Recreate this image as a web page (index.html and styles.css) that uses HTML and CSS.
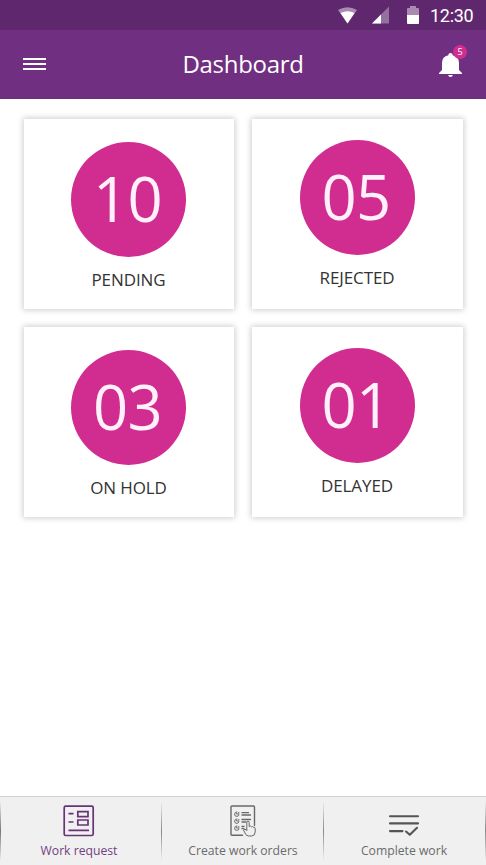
FILE: index.html
```html
<!DOCTYPE html>
<html lang="en">
<head>
<meta charset="utf-8">
<title>Dashboard</title>
<link rel="stylesheet" href="styles.css">
</head>
<body>
<div class="app">
  <div class="status">
    <svg class="wifi" width="19" height="18" viewBox="0 0 19 18"><path d="M0 4Q9.500-1.500 19 4L9.500 17.500Z" fill="#a98ab2"/><path d="M2.500 7Q9.500 3.500 16.500 7L9.500 17.500Z" fill="#fff"/></svg>
    <svg class="signal" width="17" height="18" viewBox="0 0 17 18"><path d="M0 17.500L17 .5V17.500Z" fill="#94709f"/><path d="M0 17.500L9 8.500V17.500Z" fill="#fff"/></svg>
    <svg class="battery" width="12" height="18" viewBox="0 0 12 18"><path d="M0 3Q0 2 1 2H3V0H9V2H11Q12 2 12 3V9H0Z" fill="#a98ab2"/><path d="M0 9H12V17Q12 18 11 18H1Q0 18 0 17Z" fill="#fff"/></svg>
    <span class="time">12:30</span>
  </div>
  <header class="header">
    <button class="menu" aria-label="Menu"><i></i><i></i><i></i></button>
    <h1>Dashboard</h1>
    <div class="bell">
      <svg width="23" height="24" viewBox="0 0 23 24"><path d="M0 21V20L3 17V10Q3 3.500 9.400 2.200V1.700Q9.400 0 11.500 0T13.600 1.700V2.200Q20 3.500 20 10V17L23 20V21ZM9.200 22H13.800Q13.500 24 11.500 24T9.200 22Z" fill="#fff"/></svg>
      <span class="badge">5</span>
    </div>
  </header>
  <main class="grid">
    <section class="card"><div class="circle"><span>10</span></div><p>PENDING</p></section>
    <section class="card raised"><div class="circle"><span>05</span></div><p>REJECTED</p></section>
    <section class="card"><div class="circle"><span>03</span></div><p>ON HOLD</p></section>
    <section class="card raised"><div class="circle"><span>01</span></div><p>DELAYED</p></section>
  </main>
  <nav class="tabs">
    <a class="tab active">
      <svg width="32" height="32" viewBox="0 0 32 32" fill="none" stroke="#67347a"><rect x="1.200" y="1.200" width="29" height="29.300" rx="1.500" stroke-width="1.700"/><path d="M5.500 8.700H10.500M5.500 17H10.500M5.500 25.300H26" stroke-width="1.700"/><path d="M14.800 6.700H25V11.700H14.800ZM14.800 15H25V20H14.800Z" stroke-width="1.700"/></svg>
      <span>Work request</span>
    </a>
    <a class="tab">
      <svg width="26" height="32" viewBox="0 0 26 32" fill="none" stroke="#686868" stroke-linecap="round"><path d="M12.500 30.300H2Q1 30.300 1 29.300V2Q1 1 2 1H23.500Q24.500 1 24.500 2V20.500" stroke-width="1.400"/><path d="M7 7A2.200 2.200 0 1 0 9 9M7 14A2.200 2.200 0 1 0 9 16M7 21A2.200 2.200 0 1 0 9 23M6.300 8.500L7.300 9.300L9 7.300M6.300 15.500L7.300 16.300L9 14.300M6.300 22.500L7.300 23.300L9 21.300" stroke-width="1"/><path d="M12 7.700H18.500M12 10H20.500M12 14.500H20.500M12 17H16M12 21.500H14M12 23.700H14" stroke-width="1.300"/><path d="M16.800 25V17.500Q16.800 16.200 18 16.200T19.200 17.500V21.500Q20.600 20.500 21.500 21.800Q22.800 21 23.600 22.400Q25.200 22 25.200 23.800V27Q25.200 31 21.300 31H18.700Q16 31 15 28L13.500 25Q14.500 23.400 16.800 25Z" fill="#f0f0f0" stroke-width="1"/></svg>
      <span>Create work orders</span>
    </a>
    <a class="tab last">
      <svg width="32" height="32" viewBox="0 0 32 32" fill="none" stroke="#555" stroke-width="2.100" stroke-linecap="round" stroke-linejoin="round"><path d="M2 11.200H30M2 18.400H30M2 26.100H14.500M18 26.500L21.800 29.800L29 22.800"/></svg>
      <span>Complete work</span>
    </a>
  </nav>
</div>
</body>
</html>
```
FILE: styles.css
```css
* { box-sizing: border-box; }
body { margin: 0; background: #fff; font-family: "Open Sans", sans-serif; }
.app { width: 486px; height: 865px; display: flex; flex-direction: column; overflow: hidden; }
.status { height: 30px; flex: none; background: #5f276d; display: flex; align-items: flex-start; justify-content: flex-end; padding: 6px 12px 0 0; }
.status svg { display: block; }
.wifi { margin-right: 15px; }
.signal { margin-right: 18px; }
.battery { margin-right: 11px; }
.time { font: 18px/20px Roboto, sans-serif; color: #fff; width: 44px; white-space: nowrap; letter-spacing: -.3px; }
.header { height: 69px; flex: none; background: #702f80; border-bottom: 1px solid #63356f; display: flex; justify-content: space-between; padding: 0 23px; }
.menu { width: 24px; height: 14px; margin-top: 28px; padding: 0; border: 0; background: none; display: flex; flex-direction: column; gap: 3px; }
.menu i { display: block; width: 23px; height: 2px; background: #fff; }
h1 { margin: 16px 0 0; font-size: 24px; line-height: 36px; font-weight: 400; letter-spacing: -.3px; color: #fff; }
.bell { position: relative; width: 24px; height: 24px; margin-top: 23px; }
.bell svg { display: block; }
.badge { position: absolute; left: 14px; top: -8px; width: 14px; height: 14px; border-radius: 50%; background: #d12d91; color: #fff; font-size: 9px; line-height: 14px; text-align: center; }
.grid { flex: 1; display: grid; grid-template-columns: 210px 211px; grid-template-rows: 190px 190px; gap: 18px; padding: 20px 23px 0 24px; align-content: start; }
.card { background: #fff; box-shadow: 0 0 6px 1px rgba(0,0,0,.2); display: flex; flex-direction: column; align-items: center; padding: 23px 1px 0 0; }
.raised { padding-top: 21.4px; }
.circle { flex: none; width: 115px; height: 115px; border-radius: 50%; background: #d12d91; display: flex; align-items: center; justify-content: center; color: #fff0fa; font-size: 61.5px; line-height: 113px; padding: 0 2px 2px 0; letter-spacing: -.6px; }
.card p { margin: 11px 0 0; font-size: 17px; line-height: 24px; letter-spacing: -.1px; color: #333; white-space: nowrap; }
.tabs { height: 69px; flex: none; display: grid; grid-template-columns: 162px 162px 162px; background: #f0f0f0; border-top: 1px solid #d2d2d2; }
.tab { display: flex; flex-direction: column; align-items: center; padding-top: 8px; color: #6b6b6b; font-size: 12.2px; background: linear-gradient(#f0f0f0, #888 50%, #f0f0f0) right 0 top 4px / 1px 60px no-repeat; }
.tab:first-child { background: linear-gradient(#f0f0f0, #777 50%, #f0f0f0) left 0 top 4px / 1px 60px no-repeat, linear-gradient(#f0f0f0, #888 50%, #f0f0f0) right 0 top 4px / 1px 60px no-repeat; }
.tab svg { display: block; flex: none; }
.tab span { line-height: 18px; margin-top: 5px; white-space: nowrap; }
.active { color: #704180; padding-right: 4px; }
.last { padding-right: 2px; }
```
